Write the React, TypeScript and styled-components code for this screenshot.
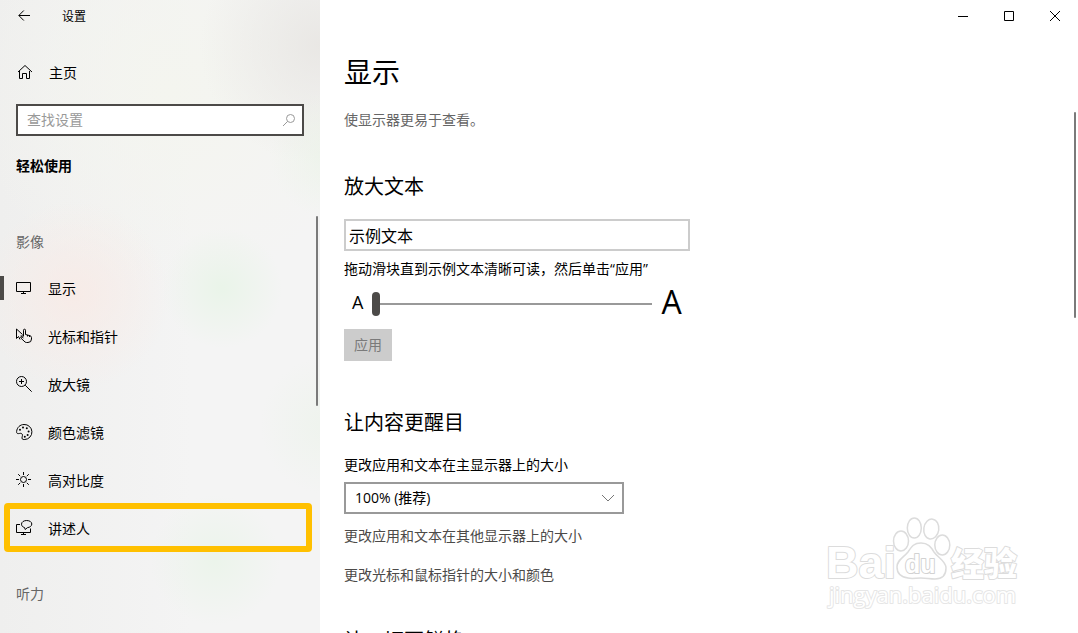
import React, { useState } from "react";
import styled, { createGlobalStyle } from "styled-components";

const GlobalStyle = createGlobalStyle`
  *, *::before, *::after { box-sizing: border-box; }
  body {
    margin: 0;
    background: #fff;
    color: #000;
    font-family: "Open Sans", "Noto Sans CJK SC", sans-serif;
    font-size: 14px;
    line-height: 20px;
  }
  button, input, select { font: inherit; color: inherit; }
  h1, h2, p, ul { margin: 0; padding: 0; font-weight: 400; }
`;

const Window = styled.div`
  display: grid;
  grid-template-columns: 320px 1fr;
  height: 100vh;
  overflow: hidden;
`;

const Sidebar = styled.aside`
  display: flex;
  flex-direction: column;
  min-height: 0;
  overflow: hidden;
  background:
    radial-gradient(circle at 75px 295px, rgba(249, 234, 229, 0.8), rgba(249, 234, 229, 0) 95px),
    radial-gradient(circle at 222px 288px, rgba(231, 244, 230, 0.8), rgba(231, 244, 230, 0) 60px),
    radial-gradient(circle at 215px 560px, rgba(232, 244, 231, 0.7), rgba(232, 244, 231, 0) 65px),
    radial-gradient(circle at 330px 425px, rgba(234, 243, 232, 0.6), rgba(234, 243, 232, 0) 70px),
    radial-gradient(circle at 335px 155px, rgba(234, 243, 230, 0.7), rgba(234, 243, 230, 0) 65px),
    radial-gradient(circle at 320px 45px, rgba(232, 230, 227, 0.9), rgba(232, 230, 227, 0) 120px),
    radial-gradient(circle at 170px 90px, rgba(244, 245, 239, 1), rgba(244, 245, 239, 0) 200px),
    linear-gradient(90deg, #efefee, #f4f4f4 60%);
`;

const TitleBar = styled.header`
  display: flex;
  flex: none;
  align-items: center;
  height: 32px;
  font-size: 12px;
`;

const BackButton = styled.button`
  display: grid;
  place-items: center;
  width: 48px;
  height: 32px;
  margin-right: 14px;
  padding: 0;
  border: 0;
  background: none;
`;

const Label = styled.span`
  padding-top: 2px;
`;

const Icon = styled.svg`
  flex: none;
  width: 16px;
  height: 16px;
  fill: none;
  stroke: currentColor;
  stroke-width: 1;
  overflow: visible;
`;

const HomeLink = styled.a`
  display: flex;
  flex: none;
  align-items: center;
  gap: 16px;
  height: 48px;
  margin-top: 16px;
  padding-left: 17px;
  color: inherit;
  text-decoration: none;
`;

const SearchBox = styled.div`
  display: flex;
  flex: none;
  align-items: center;
  height: 32px;
  margin: 8px 16px 0;
  padding: 0 5px 0 9px;
  border: 2px solid #4c4a48;
  background: #fff;
  color: #999;
`;

const SearchInput = styled.input`
  flex: 1;
  min-width: 0;
  height: 28px;
  padding: 0 0 2px;
  border: 0;
  outline: 0;
  background: none;
  color: #000;
  &::placeholder { color: #999; opacity: 1; }
`;

const SidebarHeading = styled.h2`
  flex: none;
  height: 60px;
  padding-left: 16px;
  font-size: 14px;
  font-weight: 700;
  line-height: 60px;
`;

const Nav = styled.nav`
  position: relative;
  flex: 1;
  min-height: 0;
  padding-top: 4px;
`;

const ScrollThumb = styled.span<{ $top: number; $height: number }>`
  position: absolute;
  top: ${(p) => p.$top}px;
  right: 2px;
  width: 2px;
  height: ${(p) => p.$height}px;
  border-radius: 1px;
  background: #7a7a7a;
`;

const GroupLabel = styled.p`
  height: 44px;
  margin-top: 20px;
  padding-left: 16px;
  color: #666;
  line-height: 44px;
`;

const NavList = styled.ul`
  list-style: none;
`;

const NavLink = styled.a<{ $active?: boolean; $marked?: boolean }>`
  position: relative;
  display: flex;
  align-items: center;
  gap: 16px;
  height: 48px;
  padding-left: 16px;
  color: inherit;
  text-decoration: none;

  &::before {
    content: "";
    display: ${(p) => (p.$active ? "block" : "none")};
    position: absolute;
    top: 12px;
    left: 0;
    width: 4px;
    height: 24px;
    background: #4c4a48;
  }

  &::after {
    content: "";
    display: ${(p) => (p.$marked ? "block" : "none")};
    position: absolute;
    inset: -1px 8px 0 4px;
    border: 6px solid #ffc000;
    border-radius: 4px;
  }
`;

const Main = styled.main`
  position: relative;
  min-width: 0;
  overflow: hidden;
`;

const WindowControls = styled.div`
  display: flex;
  justify-content: flex-end;
  height: 32px;
`;

const ControlButton = styled.button`
  display: grid;
  place-items: center;
  width: 46px;
  height: 32px;
  padding: 0;
  border: 0;
  background: none;
`;

const Page = styled.div`
  padding: 20px 24px 0;
`;

const PageTitle = styled.h1`
  font-size: 28px;
  line-height: 40px;
`;

const Description = styled.p`
  margin-top: 17px;
  color: #666;
  line-height: 22px;
`;

const Section = styled.section`
  margin-top: 42px;
`;

const SectionTitle = styled.h2`
  font-size: 20px;
  line-height: 28px;
`;

const SampleInput = styled.input`
  display: block;
  width: 346px;
  max-width: 100%;
  height: 32px;
  margin-top: 18px;
  padding: 0 3px;
  border: 2px solid #ccc;
  background: #fff;
  font-size: 16px;
`;

const FieldLabel = styled.label<{ $gap: number }>`
  display: block;
  margin-top: ${(p) => p.$gap}px;
`;

const SliderRow = styled.div`
  display: flex;
  align-items: center;
  gap: 9px;
  height: 36px;
  margin-top: 6px;
  padding-left: 8px;
`;

const Letter = styled.span<{ $size: number }>`
  padding-bottom: 2px;
  font-size: ${(p) => p.$size}px;
  line-height: 32px;
`;

const Slider = styled.input`
  appearance: none;
  width: 280px;
  height: 24px;
  margin: 2px 0 0;
  background: linear-gradient(#999, #999) center / 100% 2px no-repeat;

  &::-webkit-slider-thumb {
    appearance: none;
    width: 8px;
    height: 24px;
    border-radius: 4px;
    background: #4c4a48;
  }
`;

const ApplyButton = styled.button`
  display: block;
  height: 32px;
  margin: 8px 0 48px;
  padding: 0 10px;
  border: 0;
  background: #ccc;
  color: #7a7a7a;
`;

const SelectBox = styled.div`
  display: grid;
  align-items: center;
  width: 280px;
  max-width: 100%;
  height: 32px;
  margin-top: 7px;
  border: 2px solid #999;

  & > * { grid-area: 1 / 1; }
  & > svg { justify-self: end; margin-right: 6px; color: #777; pointer-events: none; }
`;

const Select = styled.select`
  appearance: none;
  width: 100%;
  height: 28px;
  padding: 0 9px;
  border: 0;
  background: none;
`;

const TextLink = styled.a<{ $gap: number }>`
  display: block;
  width: fit-content;
  margin-top: ${(p) => p.$gap}px;
  color: #4c4a48;
  text-decoration: none;
`;

const Watermark = styled.svg`
  position: absolute;
  right: 50px;
  bottom: 16px;
  width: 206px;
  height: 106px;
  pointer-events: none;
`;

const DisplayIcon = () => (
  <Icon viewBox="0 0 16 16">
    <path d="M.5 2.5h14v9H.5zM7.5 11.5v2M5 13.5h5" />
  </Icon>
);

const PointerIcon = () => (
  <Icon viewBox="0 0 16 16">
    <path d="M6.5 6.5L.5 1v9.5l2-2 1.500 3M4.500 8H7" />
    <path d="M7.500 8.500V2.200a1 1 0 0 1 2 0V6.500l4.500 1.200q1.500.5 1.500 2V11q0 3.500-3.500 3.500h-1.500q-1.500 0-2.500-1.500L4.800 10q-.3-1.300 1-1.200l1.700 1.200M11.500 7v1.500M13.500 7.600v1.400" />
  </Icon>
);

const MagnifierIcon = () => (
  <Icon viewBox="0 0 16 16">
    <circle cx="5.500" cy="5.500" r="5" />
    <path d="M9.200 9.200L15.700 15.700M5.500 3v5M3 5.500h5" />
  </Icon>
);

const PaletteIcon = () => (
  <Icon viewBox="0 0 16 16">
    <path d="M.6 7.500C1 3.500 4 .5 8 .5a7.500 7.500 0 0 1 .8 15C6 15.800 5.600 14.500 6.200 12.800 7 10.500 6 9.200 4.300 9.300 2.500 9.600.4 10.300.6 7.500z" />
    <g fill="currentColor" stroke="none">
      <circle cx="4" cy="5.800" r="1" />
      <circle cx="7" cy="3.600" r="1" />
      <circle cx="10.800" cy="4.200" r="1" />
      <circle cx="12.600" cy="7.500" r="1" />
      <circle cx="11.600" cy="11" r="1" />
      <circle cx="8.800" cy="12.800" r="1" />
    </g>
  </Icon>
);

const ContrastIcon = () => (
  <Icon viewBox="0 0 16 16">
    <circle cx="7.500" cy="7.500" r="3" />
    <path d="M7.500 0v3M7.500 12v3M0 7.500h3M12 7.500h3M2.200 2.200l2 2M10.800 10.800l2 2M12.800 2.200l-2 2M4.200 10.800l-2 2" />
  </Icon>
);

const NarratorIcon = () => (
  <Icon viewBox="0 0 16 16">
    <path d="M4 4.500H.5v8h14V8.500M7.500 12.500v2M5 14.500h5" />
    <path d="M8.500 7.500C6.500 7 5.500 5.700 5.500 4.200 5.500 2 7.800.5 10.700.5s5.100 1.500 5.100 3.500-2 3.500-4.300 3.600L9.200 9.500z" />
  </Icon>
);

const visionItems = [
  { label: "显示", icon: <DisplayIcon />, active: true },
  { label: "光标和指针", icon: <PointerIcon /> },
  { label: "放大镜", icon: <MagnifierIcon /> },
  { label: "颜色滤镜", icon: <PaletteIcon /> },
  { label: "高对比度", icon: <ContrastIcon /> },
  { label: "讲述人", icon: <NarratorIcon />, marked: true },
];

export default function App() {
  const [scale, setScale] = useState(0);
  const [sample, setSample] = useState("示例文本");

  return (
    <>
      <GlobalStyle />
      <Window>
        <Sidebar>
          <TitleBar>
            <BackButton aria-label="返回">
              <Icon viewBox="0 0 16 16">
                <path d="M14 7.500H3M7.800 2.500L2.800 7.500l5 5" />
              </Icon>
            </BackButton>
            <Label>设置</Label>
          </TitleBar>
          <HomeLink href="#home">
            <Icon viewBox="0 0 16 16">
              <path d="M1 8L8 1.500 15 8M2.500 7v7.500h3v-5h4v5h3V7" />
            </Icon>
            <Label>主页</Label>
          </HomeLink>
          <SearchBox>
            <SearchInput type="text" placeholder="查找设置" aria-label="查找设置" />
            <Icon viewBox="0 0 16 16">
              <circle cx="9.500" cy="6.500" r="4" />
              <path d="M6.600 9.400L2 14" />
            </Icon>
          </SearchBox>
          <SidebarHeading>轻松使用</SidebarHeading>
          <Nav>
            <GroupLabel>影像</GroupLabel>
            <NavList>
              {visionItems.map((item) => (
                <li key={item.label}>
                  <NavLink href="#" $active={item.active} $marked={item.marked}>
                    {item.icon}
                    <Label>{item.label}</Label>
                  </NavLink>
                </li>
              ))}
            </NavList>
            <GroupLabel>听力</GroupLabel>
            <ScrollThumb $top={20} $height={190} />
          </Nav>
        </Sidebar>

        <Main>
          <WindowControls>
            <ControlButton aria-label="最小化">
              <Icon viewBox="0 0 16 16"><path d="M3 8.500h10" /></Icon>
            </ControlButton>
            <ControlButton aria-label="最大化">
              <Icon viewBox="0 0 16 16"><path d="M3.500 3.500h9v9h-9z" /></Icon>
            </ControlButton>
            <ControlButton aria-label="关闭">
              <Icon viewBox="0 0 16 16"><path d="M3 3l10 10M13 3L3 13" /></Icon>
            </ControlButton>
          </WindowControls>
          <Page>
            <PageTitle>显示</PageTitle>
            <Description>使显示器更易于查看。</Description>

            <Section>
              <SectionTitle>放大文本</SectionTitle>
              <SampleInput
                type="text"
                aria-label="示例文本"
                value={sample}
                onChange={(e) => setSample(e.target.value)}
              />
              <FieldLabel $gap={8} htmlFor="text-size">
                拖动滑块直到示例文本清晰可读，然后单击“应用”
              </FieldLabel>
              <SliderRow>
                <Letter $size={18}>A</Letter>
                <Slider
                  id="text-size"
                  type="range"
                  min={0}
                  max={100}
                  value={scale}
                  onChange={(e) => setScale(Number(e.target.value))}
                />
                <Letter $size={32}>A</Letter>
              </SliderRow>
              <ApplyButton disabled>应用</ApplyButton>
            </Section>

            <Section>
              <SectionTitle>让内容更醒目</SectionTitle>
              <FieldLabel $gap={18} htmlFor="display-scale">
                更改应用和文本在主显示器上的大小
              </FieldLabel>
              <SelectBox>
                <Select id="display-scale" defaultValue="100">
                  <option value="100">100% (推荐)</option>
                  <option value="125">125%</option>
                </Select>
                <Icon viewBox="0 0 16 16"><path d="M2 5l6 6 6-6" /></Icon>
              </SelectBox>
              <TextLink href="#other-displays" $gap={12}>更改应用和文本在其他显示器上的大小</TextLink>
              <TextLink href="#cursor" $gap={19}>更改光标和鼠标指针的大小和颜色</TextLink>
            </Section>

            <Section>
              <SectionTitle>让一切更鲜艳</SectionTitle>
            </Section>
          </Page>
          <ScrollThumb $top={112} $height={206} />
          <Watermark viewBox="0 0 206 106" aria-label="百度经验">
            <g fill="#fff" stroke="#dcdcdc" strokeWidth="1.500">
              <ellipse cx="79" cy="30" rx="7.500" ry="10" />
              <ellipse cx="92.300" cy="17" rx="7" ry="10" />
              <ellipse cx="109.300" cy="18" rx="7.500" ry="10" transform="rotate(8 109 18)" />
              <ellipse cx="120.300" cy="34" rx="7.500" ry="10" />
              <path d="M99 32c7 0 10 4 13 9 4 6 12 9 12 16 0 8-5 11-11 11-5 0-9-1-14-1s-9 1-13 0c-7-1-11-5-11-11 0-7 6-9 11-15 4-6 6-9 13-9z" />
            </g>
            <g
              fill="#fff"
              stroke="#dcdcdc"
              strokeWidth="2"
              strokeLinejoin="round"
              paintOrder="stroke"
              fontFamily="Liberation Sans, Noto Sans CJK SC, sans-serif"
              fontWeight="700"
            >
              <text x="4" y="67" fontSize="45">Bai</text>
              <text x="83" y="62" fontSize="25" stroke="#d2d2d2">du</text>
              <text x="129" y="65" fontSize="33" fontWeight="900">经验</text>
              <text x="7" y="92" fontSize="22" stroke="#e6e6e6" fontFamily="Open Sans, sans-serif" fontWeight="500">jingyan.baidu.com</text>
            </g>
          </Watermark>
        </Main>
      </Window>
    </>
  );
}
